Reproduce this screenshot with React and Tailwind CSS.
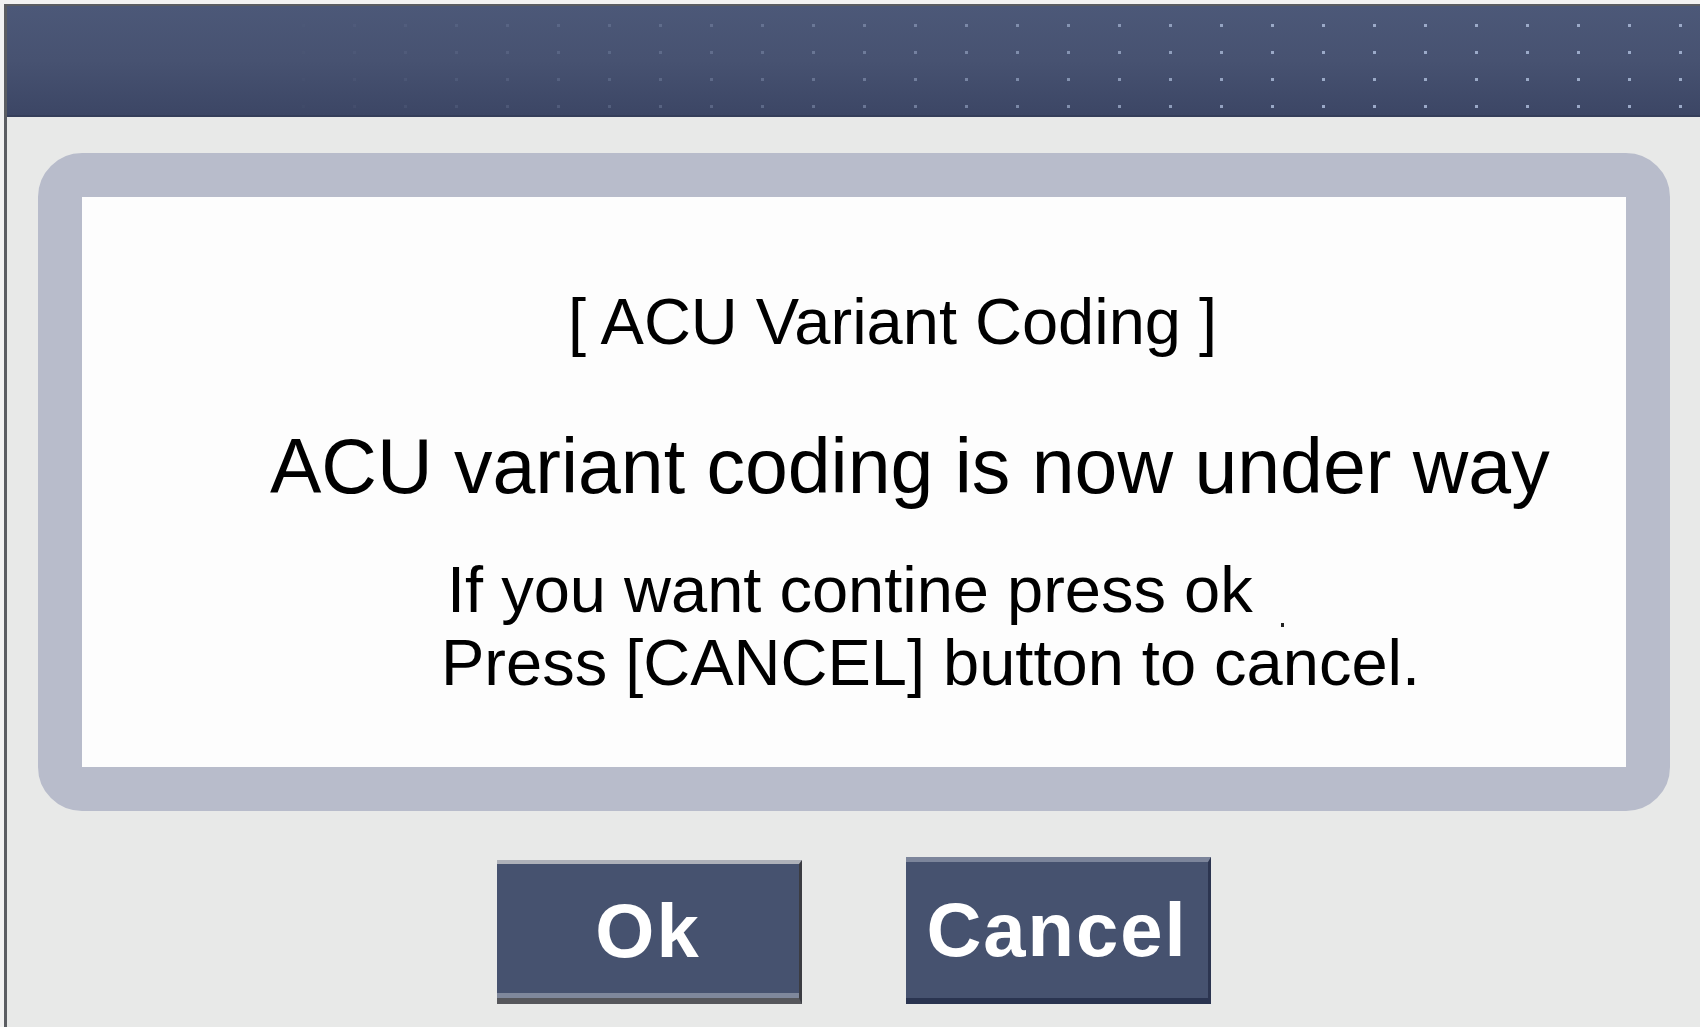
import React from "react";

const font = { fontFamily: '"Liberation Sans", Arial, sans-serif' };

export default function App() {
  return (
    <div className="w-[1700px] h-[1027px] bg-[#f2f2f2] pl-[4px] pt-[4px] overflow-hidden" style={font}>
      <div className="h-full flex flex-col border-l-[3px] border-t-[2px] border-[#5b5d62]">
        {/* Title bar */}
        <header className="relative h-[111px] shrink-0 overflow-hidden bg-gradient-to-b from-[#4c5878] via-[#475271] to-[#3c4665] border-b-[2px] border-[#353e5a]">
          <div className="absolute inset-0 bg-[radial-gradient(circle,rgba(160,175,205,0.95)_1.5px,transparent_2px)] bg-[length:51px_27px] bg-[position:16px_6px] [mask-image:linear-gradient(to_right,transparent_15%,rgba(0,0,0,0.35)_45%,black_75%)]" />
        </header>

        {/* Body */}
        <main className="flex-1 bg-[#e8e9e8] pt-[36px] pl-[31px]">
          <section className="box-border w-[1632px] h-[658px] border-[44px] border-[#b8bccb] rounded-[44px] bg-[#b8bccb]">
            <div className="relative h-full bg-[#fdfdfd] pt-[92px] text-black">
              <p className="ml-[486px] text-[65px] leading-none whitespace-nowrap">[ ACU Variant Coding ]</p>
              <p className="ml-[188px] mt-[74px] text-[77px] leading-none whitespace-nowrap">ACU variant coding is now under way</p>
              <p className="ml-[365px] mt-[52px] text-[65px] leading-none whitespace-nowrap">If you want contine press ok</p>
              <p className="ml-[359px] mt-[8px] text-[65px] leading-none whitespace-nowrap">Press [CANCEL] button to cancel.</p>
              <span className="absolute left-[1199px] top-[426px] w-[3px] h-[4px] bg-[#222]" />
            </div>
          </section>

          <div className="flex items-start ml-[459px]">
            <button className="mt-[49px] box-border w-[305px] h-[144px] bg-[#46526f] border-t-[4px] border-t-[#aeb1b9] border-r-[3px] border-r-[#3b3c42] border-b-[6px] border-b-[#56575c] shadow-[inset_0_-5px_0_#7f889c] flex items-center justify-center text-white font-bold text-[76px] leading-none tracking-[2px]">
              Ok
            </button>
            <button className="ml-[104px] mt-[46px] box-border w-[305px] h-[147px] bg-[#46526f] border-t-[5px] border-t-[#7c859b] border-r-[3px] border-r-[#2c3550] border-b-[6px] border-b-[#2a3450] flex items-center justify-center text-white font-bold text-[76px] leading-none tracking-[2px]">
              Cancel
            </button>
          </div>
        </main>
      </div>
    </div>
  );
}
